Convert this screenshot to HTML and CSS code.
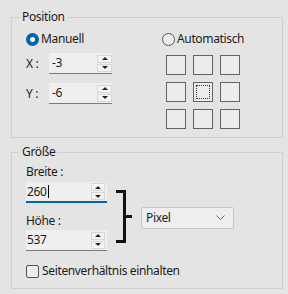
FILE: index.html
```html
<!DOCTYPE html>
<html lang="de">
<head>
  <meta charset="UTF-8">
  <title>Position und Größe</title>
  <link rel="stylesheet" href="styles.css">
</head>
<body>

<div class="dialog">

  <fieldset class="group">
    <legend>Position</legend>
    <div class="pos-body">
      <div class="pos-manual">
        <div class="radio"><span class="radio-dot checked"></span>Manuell</div>
        <div class="coord-row">
          <span class="coord-label">X :</span>
          <div class="spin">
            <span class="spin-value">-3</span>
            <span class="spin-buttons"><span class="spin-btn up"></span><span class="spin-btn down"></span></span>
          </div>
        </div>
        <div class="coord-row second">
          <span class="coord-label">Y :</span>
          <div class="spin">
            <span class="spin-value">-6</span>
            <span class="spin-buttons"><span class="spin-btn up"></span><span class="spin-btn down"></span></span>
          </div>
        </div>
      </div>
      <div class="pos-auto">
        <div class="radio"><span class="radio-dot"></span>Automatisch</div>
        <div class="anchor-grid">
          <span class="cell"></span><span class="cell"></span><span class="cell"></span>
          <span class="cell"></span><span class="cell current"><span class="cell-focus"></span></span><span class="cell"></span>
          <span class="cell"></span><span class="cell"></span><span class="cell"></span>
        </div>
      </div>
    </div>
  </fieldset>

  <fieldset class="group size-group">
    <legend>Größe</legend>
    <div class="size-body">
      <div class="size-row">
        <div class="size-fields">
          <div class="field-label">Breite :</div>
          <div class="spin size focused">
            <span class="spin-value">260<span class="caret"></span></span>
            <span class="spin-buttons"><span class="spin-btn up"></span><span class="spin-btn down"></span></span>
          </div>
          <div class="field-label second">Höhe :</div>
          <div class="spin size second">
            <span class="spin-value">537</span>
            <span class="spin-buttons"><span class="spin-btn up"></span><span class="spin-btn down"></span></span>
          </div>
        </div>
        <div class="link">
          <span class="link-bracket"></span>
          <span class="link-tick"></span>
        </div>
        <div class="select">
          <span class="select-value">Pixel</span>
          <svg class="select-arrow" width="9" height="6" viewBox="0 0 9 6"><polyline points="0.5,0.5 4.5,4.5 8.5,0.5" fill="none" stroke="#6a6a6a" stroke-width="1"/></svg>
        </div>
      </div>
      <div class="check-row"><span class="check"></span>Seitenverhältnis einhalten</div>
    </div>
  </fieldset>

</div>

</body>
</html>
```

FILE: styles.css
```css
body { margin: 0; background: #e4e4e4; font-family: "Noto Sans", "Liberation Sans", sans-serif; font-size: 12px; line-height: 16px; letter-spacing: -0.35px; color: #1b1b1b; }
.dialog { width: 288px; height: 294px; padding-top: 9px; box-sizing: border-box; }

/* Gruppenrahmen */
.group { margin: 0 5px 0 11px; padding: 0; border: 1px solid #cfcfcf; min-width: 0; }
.group legend { margin-left: 8px; padding: 0 2px; line-height: 16px; }
.size-group { margin-top: 6px; }

/* Position */
.pos-body { display: grid; grid-template-columns: 136px auto; padding: 6px 0 8px 14px; }
.radio { display: flex; align-items: center; gap: 2px; height: 16px; }
.radio-dot { width: 13px; height: 13px; box-sizing: border-box; border-radius: 50%; border: 1px solid #555; background: #ececec; }
.radio-dot.checked { border: 4px solid #0063b1; background: #fff; }
.coord-row { display: flex; align-items: center; margin-top: 6px; }
.coord-row.second { margin-top: 9px; }
.coord-label { width: 23px; }

/* Drehfeld */
.spin { display: flex; align-items: center; width: 63px; height: 21px; box-sizing: border-box; padding-left: 3px; background: #efefef; border-bottom: 1px solid #7a7a7a; }
.spin-value { flex: 1; display: flex; align-items: center; }
.spin-buttons { display: flex; flex-direction: column; gap: 1px; }
.spin-btn { display: flex; align-items: center; justify-content: center; width: 15px; height: 8px; box-sizing: border-box; border: 1px solid #d6d6d6; background: #f5f5f5; }
.spin-btn.up::before { content: ""; border-left: 3px solid transparent; border-right: 3px solid transparent; border-bottom: 3px solid #222; }
.spin-btn.down::before { content: ""; border-left: 3px solid transparent; border-right: 3px solid transparent; border-top: 3px solid #222; }
.spin.size { width: 81px; margin-top: 2px; padding-left: 1px; }
.spin.size .spin-buttons { margin-right: 2px; }
.spin.size .spin-btn { width: 14px; }
.spin.size.second { margin-top: 1px; }
.spin.focused { border-bottom: 2px solid #0063b1; }
.caret { width: 1px; height: 13px; background: #000; margin-left: 1px; }

/* Ausrichtungsraster */
.anchor-grid { display: grid; grid-template-columns: repeat(3, 20px); grid-auto-rows: 20px; gap: 7px; margin: 8px 0 0 4px; }
.cell { display: flex; padding: 2px; box-sizing: border-box; border: 1px solid #646464; background: #ececec; }
.cell-focus { flex: 1; border: 1px dotted #333; }

/* Größe */
.size-body { padding: 4px 0 9px 14px; }
.size-row { display: flex; align-items: flex-start; }
.size-fields { width: 81px; }
.field-label { height: 16px; }
.field-label.second { margin-top: 10px; }
.link { display: flex; align-items: center; margin: 26px 0 0 9px; }
.link-bracket { width: 10px; height: 53px; box-sizing: border-box; border: 3px solid #111; border-left: none; }
.link-tick { width: 6px; height: 3px; background: #111; }
.select { display: flex; align-items: center; justify-content: space-between; width: 93px; height: 22px; box-sizing: border-box; margin: 43px 0 0 9px; padding: 0 8px 0 4px; background: #eeeeee; border: 1px solid #c6c6c6; border-radius: 2px; }
.check-row { display: flex; align-items: center; gap: 3px; height: 16px; margin-top: 12px; }
.check { width: 13px; height: 13px; box-sizing: border-box; border: 1px solid #555; border-radius: 2px; background: #ececec; }
```
